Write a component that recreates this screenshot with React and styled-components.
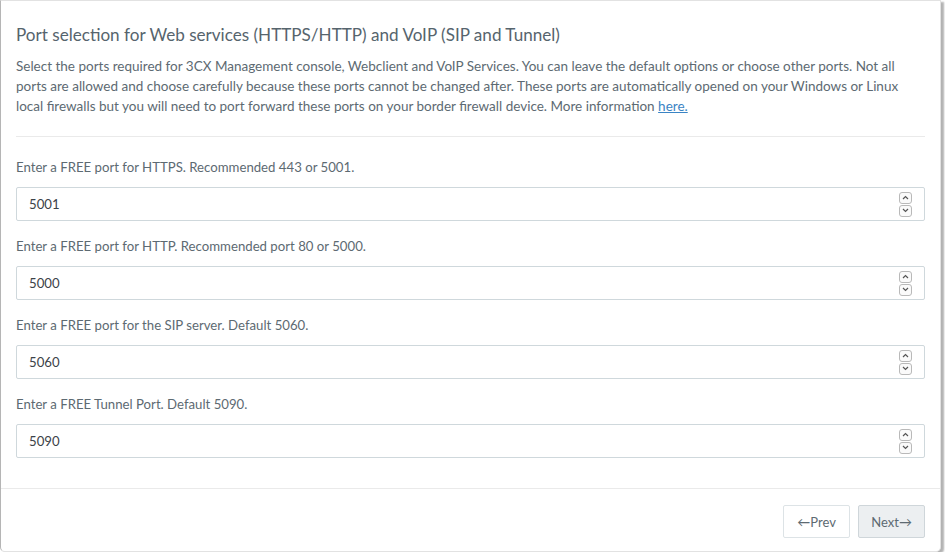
import React from "react";
import styled, { createGlobalStyle } from "styled-components";

const GlobalStyle = createGlobalStyle`
  html, body {
    margin: 0;
    padding: 0;
    background: #ffffff;
  }
  body {
    font-family: "Lato", "Noto Sans", sans-serif;
    color: #5d6a72;
  }
`;

const Card = styled.div`
  width: 941px;
  height: 552px;
  box-sizing: border-box;
  background: #fff;
  border: 1px solid #e2e2e2;
  border-left-color: #b5b5b5;
  border-radius: 0 0 5px 5px;
  box-shadow: 3px 2px 2px rgba(0, 0, 0, 0.3);
  display: flex;
  flex-direction: column;
`;

const Body = styled.div`
  padding: 22px 15px 0 15px;
  flex: 1;
`;

const Title = styled.h3`
  margin: 0;
  font-size: 17.1px;
  font-weight: 400;
  line-height: 24px;
  color: #56646d;
`;

const Intro = styled.p`
  margin: 9px 0 0 0;
  font-size: 13.5px;
  line-height: 20px;
  color: #5d6a72;

  a {
    color: #3a84c4;
    text-decoration: underline;
  }
`;

const Divider = styled.hr`
  border: 0;
  border-top: 1px solid #eaeaea;
  margin: ${({ $full }) => ($full ? "0" : "20px 0 0 0")};
`;

const Fields = styled.div`
  display: flex;
  flex-direction: column;
  gap: 15px;
  padding-top: 20px;
`;

const Field = styled.div`
  display: flex;
  flex-direction: column;
  gap: 10px;
`;

const Label = styled.label`
  font-size: 13.2px;
  line-height: 20px;
  color: #5d6a72;
`;

const InputBox = styled.div`
  height: 34px;
  box-sizing: border-box;
  border: 1px solid #cfd8dc;
  border-radius: 2px;
  display: flex;
  align-items: center;
  padding: 0 12px 0 12px;
`;

const Input = styled.input`
  flex: 1;
  border: 0;
  outline: none;
  font-family: inherit;
  font-size: 13.2px;
  color: #3c4248;
  background: transparent;
  padding: 0;
`;

const Spinner = styled.div`
  display: flex;
  flex-direction: column;
  gap: 1px;
`;

const SpinButton = styled.span`
  width: 11px;
  height: 10px;
  border: 1px solid #b9b9b9;
  border-radius: 3px;
  display: flex;
  align-items: center;
  justify-content: center;
  background: #fafafa;
`;

const Footer = styled.div`
  display: flex;
  justify-content: flex-end;
  gap: 8px;
  padding: 16px 15px 13px 15px;
`;

const NavButton = styled.button`
  height: 33px;
  box-sizing: border-box;
  padding: 0 ${({ $next }) => ($next ? "12px" : "13.5px")};
  border: 1px solid ${({ $next }) => ($next ? "#cfd6da" : "#dde3e6")};
  border-radius: 2px;
  background: ${({ $next }) => ($next ? "#eceff1" : "#ffffff")};
  color: #5d6a72;
  font-family: inherit;
  font-size: 13px;
  cursor: pointer;
`;

const Chevron = ({ up }) => (
  <svg width="7" height="5" viewBox="0 0 7 5">
    <path
      d={up ? "M1 4 L3.5 1.5 L6 4" : "M1 1 L3.5 3.5 L6 1"}
      fill="none"
      stroke="#555"
      strokeWidth="1.2"
    />
  </svg>
);

const fields = [
  { label: "Enter a FREE port for HTTPS. Recommended 443 or 5001.", value: "5001" },
  { label: "Enter a FREE port for HTTP. Recommended port 80 or 5000.", value: "5000" },
  { label: "Enter a FREE port for the SIP server. Default 5060.", value: "5060" },
  { label: "Enter a FREE Tunnel Port. Default 5090.", value: "5090" },
];

const App = () => {
  return (
    <>
      <GlobalStyle />
      <Card>
        <Body>
          <Title>Port selection for Web services (HTTPS/HTTP) and VoIP (SIP and Tunnel)</Title>
          <Intro>
            Select the ports required for 3CX Management console, Webclient and VoIP Services. You
            can leave the default options or choose other ports. Not all ports are allowed and
            choose carefully because these ports cannot be changed after. These ports are
            automatically opened on your Windows or Linux local firewalls but you will need to port
            forward these ports on your border firewall device. More information <a href="#">here.</a>
          </Intro>
          <Divider />
          <Fields>
            {fields.map((f) => (
              <Field key={f.value}>
                <Label>{f.label}</Label>
                <InputBox>
                  <Input type="text" defaultValue={f.value} />
                  <Spinner>
                    <SpinButton>
                      <Chevron up />
                    </SpinButton>
                    <SpinButton>
                      <Chevron />
                    </SpinButton>
                  </Spinner>
                </InputBox>
              </Field>
            ))}
          </Fields>
        </Body>
        <Divider $full />
        <Footer>
          <NavButton>←Prev</NavButton>
          <NavButton $next>Next→</NavButton>
        </Footer>
      </Card>
    </>
  );
};

export default App;
